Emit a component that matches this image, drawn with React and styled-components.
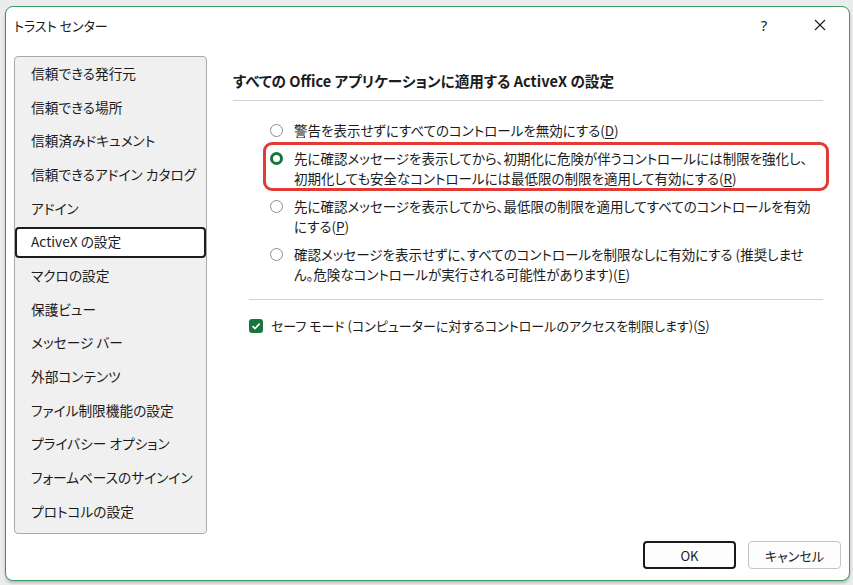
import React from "react";
import styled, { createGlobalStyle, css } from "styled-components";

const Global = createGlobalStyle`
  html, body { margin: 0; padding: 0; }
  body {
    background: #ececec;
    font-family: "Noto Sans CJK JP", "Noto Sans", sans-serif;
    font-feature-settings: "palt";
    color: #1b1b1b;
  }
`;

const Screen = styled.div`
  width: 853px;
  height: 585px;
  padding: 6px 0 0 5px;
  box-sizing: border-box;
`;

const Window = styled.div`
  width: 845px;
  height: 575px;
  box-sizing: border-box;
  border: 1px solid #3a9a62;
  border-radius: 8px;
  background: #ffffff;
  box-shadow: 0 2px 3px rgba(0, 0, 0, 0.22);
  display: flex;
  flex-direction: column;
  overflow: hidden;
`;

const TitleBar = styled.div`
  height: 36px;
  display: flex;
  align-items: center;
  padding-left: 8px;
  font-size: 13px;
`;

const Title = styled.div`
  flex: 1;
`;

const TitleButton = styled.button`
  border: none;
  background: transparent;
  width: 46px;
  height: 36px;
  padding: 0;
  display: flex;
  align-items: center;
  justify-content: center;
  color: #1b1b1b;
  font-family: "Noto Sans", sans-serif;
  font-size: 15px;
  margin-right: ${(p) => p.$mr || 0}px;
`;

const Body = styled.div`
  flex: 1;
  display: flex;
  padding: 13px 0 0 8px;
`;

const Nav = styled.div`
  width: 193px;
  height: 478px;
  box-sizing: border-box;
  border: 1px solid #a9a9a9;
  border-radius: 4px;
  background: #f0f0f0;
  display: flex;
  flex-direction: column;
`;

const NavItem = styled.div`
  height: 33.7px;
  padding: 1.3px 0;
  box-sizing: border-box;
  display: flex;
`;

const NavLabel = styled.div`
  flex: 1;
  display: flex;
  align-items: center;
  box-sizing: border-box;
  padding: 0 0 2px 14px;
  border: 2px solid transparent;
  border-radius: 4px;
  font-size: 13.7px;
  white-space: nowrap;
  ${(p) =>
    p.$active &&
    css`
      border-color: #1c1c1c;
      background: #ffffff;
    `}
`;

const Main = styled.div`
  flex: 1;
  margin-left: 26px;
  padding: 15px 26px 0 0;
  display: flex;
  flex-direction: column;
`;

const Heading = styled.div`
  font-size: 14.6px;
  font-weight: 700;
  line-height: 20px;
  white-space: nowrap;
`;

const Rule = styled.div`
  height: 1px;
  background: #d2d2d2;
  margin: ${(p) => p.$m};
`;

const Options = styled.div`
  display: flex;
  flex-direction: column;
  padding: 15px 0 0 37px;
`;

const Option = styled.label`
  display: flex;
  align-items: flex-start;
  padding: ${(p) => (p.$tight ? "0" : "4px 0")};
  font-size: 13.5px;
  line-height: 20px;
`;

const Highlight = styled.div`
  border: 3px solid #e23a34;
  border-radius: 9px;
  margin: -2px -6px 1px -7px;
  padding: 3px 0 0 4px;
`;

const Radio = styled.span`
  flex: none;
  width: 13px;
  height: 13px;
  box-sizing: border-box;
  border-radius: 50%;
  margin: 3.5px 11px 0 0;
  border: 1.3px solid #8c8c8c;
  background: #fff;
  ${(p) =>
    p.$checked &&
    css`
      border: 3.6px solid #16753d;
    `}
`;

const OptionText = styled.span`
  white-space: nowrap;
  u {
    text-underline-offset: 2px;
  }
`;

const CheckRow = styled.label`
  display: flex;
  align-items: center;
  margin: 16px 0 0 16px;
  font-size: 13px;
  line-height: 20px;
  white-space: nowrap;
  u {
    text-underline-offset: 2px;
  }
`;

const CheckBox = styled.span`
  width: 14px;
  height: 14px;
  border-radius: 3px;
  background: #17753e;
  display: flex;
  align-items: center;
  justify-content: center;
  margin-right: 8px;
`;

const Footer = styled.div`
  display: flex;
  justify-content: flex-end;
  gap: 12px;
  padding: 0 8px 11px 0;
`;

const Button = styled.button`
  width: 93px;
  height: 28px;
  box-sizing: border-box;
  background: #fdfdfd;
  border-radius: 4px;
  font-family: "Noto Sans CJK JP", "Noto Sans", sans-serif;
  font-feature-settings: "palt";
  font-size: 13px;
  color: #1b1b1b;
  padding: 0;
  border: ${(p) => (p.$primary ? "2px solid #1a1a1a" : "1px solid #c4c4c4")};
`;

const navItems = [
  "信頼できる発行元",
  "信頼できる場所",
  "信頼済みドキュメント",
  "信頼できるアドイン カタログ",
  "アドイン",
  "ActiveX の設定",
  "マクロの設定",
  "保護ビュー",
  "メッセージ バー",
  "外部コンテンツ",
  "ファイル制限機能の設定",
  "プライバシー オプション",
  "フォームベースのサインイン",
  "プロトコルの設定",
];

export default function App() {
  return (
    <Screen>
      <Global />
      <Window>
        <TitleBar>
          <Title>トラスト センター</Title>
          <TitleButton $mr={10}>?</TitleButton>
          <TitleButton $mr={6}>
            <svg width="12" height="12" viewBox="0 0 12 12">
              <path d="M1 1L11 11M11 1L1 11" stroke="#1b1b1b" strokeWidth="1.1" />
            </svg>
          </TitleButton>
        </TitleBar>
        <Body>
          <Nav>
            {navItems.map((t) => (
              <NavItem key={t}>
                <NavLabel $active={t === "ActiveX の設定"}>{t}</NavLabel>
              </NavItem>
            ))}
          </Nav>
          <Main>
            <Heading>すべての Office アプリケーションに適用する ActiveX の設定</Heading>
            <Rule $m="9px 0 0 0" />
            <Options>
              <Option>
                <Radio />
                <OptionText>
                  警告を表示せずにすべてのコントロールを無効にする(<u>D</u>)
                </OptionText>
              </Option>
              <Highlight>
                <Option $tight>
                  <Radio $checked />
                  <OptionText>
                    先に確認メッセージを表示してから、初期化に危険が伴うコントロールには制限を強化し、
                    <br />
                    初期化しても安全なコントロールには最低限の制限を適用して有効にする(<u>R</u>)
                  </OptionText>
                </Option>
              </Highlight>
              <Option>
                <Radio />
                <OptionText>
                  先に確認メッセージを表示してから、最低限の制限を適用してすべてのコントロールを有効
                  <br />
                  にする(<u>P</u>)
                </OptionText>
              </Option>
              <Option>
                <Radio />
                <OptionText>
                  確認メッセージを表示せずに、すべてのコントロールを制限なしに有効にする (推奨しませ
                  <br />
                  ん。危険なコントロールが実行される可能性があります)(<u>E</u>)
                </OptionText>
              </Option>
            </Options>
            <Rule $m="11px 0 0 16px" />
            <CheckRow>
              <CheckBox>
                <svg width="10" height="10" viewBox="0 0 10 10">
                  <path d="M1.5 5.2L4 7.6L8.6 2.6" fill="none" stroke="#fff" strokeWidth="1.6" />
                </svg>
              </CheckBox>
              セーフ モード (コンピューターに対するコントロールのアクセスを制限します)(<u>S</u>)
            </CheckRow>
          </Main>
        </Body>
        <Footer>
          <Button $primary>OK</Button>
          <Button>キャンセル</Button>
        </Footer>
      </Window>
    </Screen>
  );
}
